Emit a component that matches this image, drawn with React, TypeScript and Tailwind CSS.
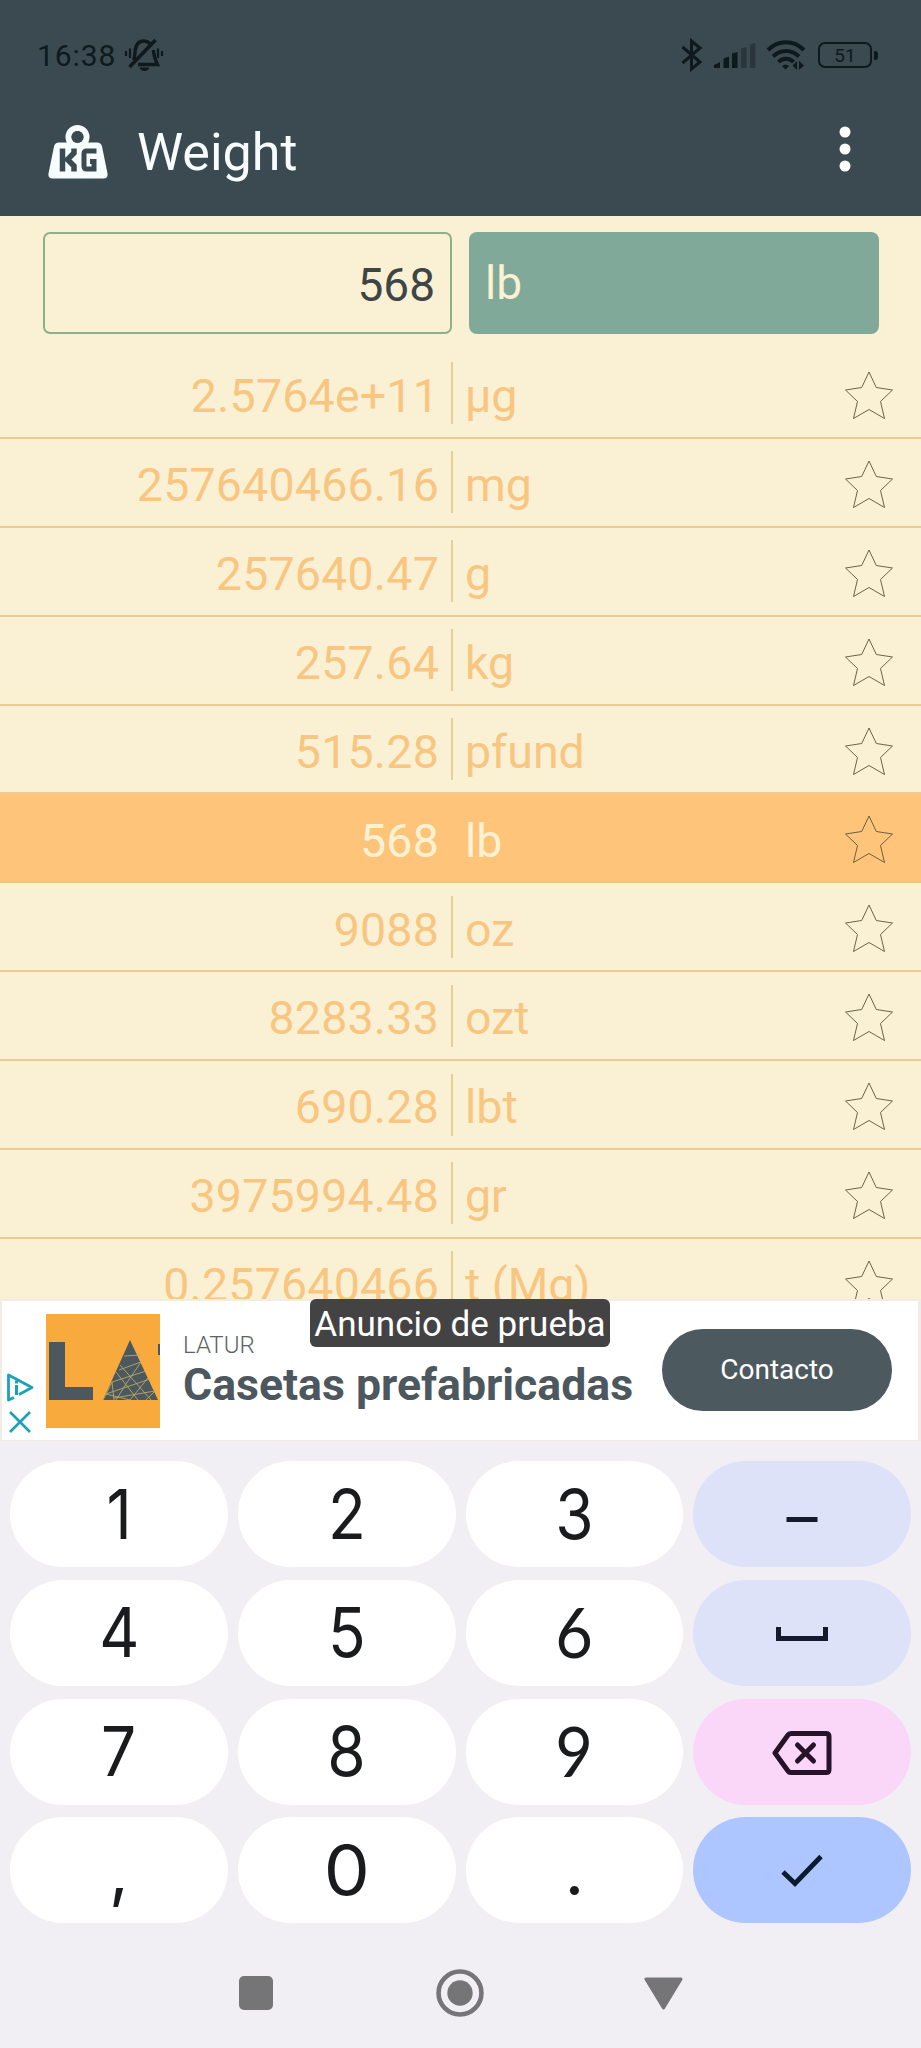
import type { ReactNode } from "react";

type Unit = { value: string; unit: string; selected?: boolean };

const units: Unit[] = [
  { value: "2.5764e+11", unit: "µg" },
  { value: "257640466.16", unit: "mg" },
  { value: "257640.47", unit: "g" },
  { value: "257.64", unit: "kg" },
  { value: "515.28", unit: "pfund" },
  { value: "568", unit: "lb", selected: true },
  { value: "9088", unit: "oz" },
  { value: "8283.33", unit: "ozt" },
  { value: "690.28", unit: "lbt" },
  { value: "3975994.48", unit: "gr" },
  { value: "0.257640466", unit: "t (Mg)" },
];

function MutedBell() {
  return (
    <svg className="ml-[8px] h-[34px] w-[40px]" viewBox="0 0 40 34" fill="none" stroke="#0f191d" strokeWidth="3.400">
      <path d="M9.500 22c2-4 1-7 2-11 1-5 4-8 8-8 3 0 5 1 6.500 3M29.500 12c0 4 1 8 4 14.500H14" />
      <path d="M31.500 2 5.500 29" strokeWidth="3.600" />
      <path d="M15.500 29.500h10c-.8 2.300-2.300 3.500-5 3.500s-4.200-1.200-5-3.500z" fill="#0f191d" stroke="none" />
      <path d="M2 13v5M6 10.500v9.500M34 10.500v9.500M38 13v5" strokeWidth="2.200" />
    </svg>
  );
}

function StatusIcons() {
  return (
    <div className="flex items-center">
      <svg className="h-[34px] w-[22px]" viewBox="0 0 22 34" fill="none" stroke="#0f191d" strokeWidth="3">
        <path d="M1.500 9 19 24 10.500 31V3L19 10 1.500 25" />
      </svg>
      <svg className="ml-[11px] h-[30px] w-[42px]" viewBox="0 0 42 30">
        <path d="M0 28v-3l6-3v6zM9.500 28V18.500l5.500-2v11.500zM18 28V13.500l5.500-1.500v16z" fill="#0f191d" />
        <path d="M27 28V8.500l5.500-1.500v21zM36 28V4.500l5.500-1.500v25z" fill="#2b363c" />
      </svg>
      <svg className="ml-[10px] h-[30px] w-[40px]" viewBox="0 0 40 30" fill="none" stroke="#0f191d" strokeWidth="4">
        <path d="M2 10C12-.5 28-.5 38 10M7 16.500c7.500-7.500 18.500-7.500 26 0M12.500 22c4-4.500 11-4.500 15 0" />
        <path d="M16 26q4-3 7 0l-3.500 3.500z" fill="#0f191d" stroke="none" />
        <path d="M31 21v9l-4.500-4.500zM33 30v-9l5 4.500z" fill="#0f191d" stroke="none" />
      </svg>
      <div className="ml-[12px] flex h-[26px] w-[54px] items-center justify-center rounded-[7px] border-[2.500px] border-[#0f191d] text-[19px] leading-none text-[#0f191d]">
        51
      </div>
      <div className="ml-[2px] h-[9px] w-[4px] rounded-r-[3px] bg-[#0f191d]" />
    </div>
  );
}

function WeightIcon() {
  return (
    <svg className="h-[56px] w-[60px]" viewBox="0 0 60 56">
      <circle cx="29.500" cy="13" r="9" fill="none" stroke="#f7fcff" strokeWidth="6" />
      <path d="M11 18.500h38q4 0 5 4l5.500 27q.8 5-4 5H4.500q-4.800 0-4-5L6 22.500q1-4 5-4z" fill="#f7fcff" />
      <path d="M14.500 24.500v23M26 24.500v4.500l-6.500 6.500L26 42v5.500" fill="none" stroke="#3b4950" strokeWidth="5.500" />
      <path d="M48.500 27H38.500q-2.500 0-2.500 3v12q0 3 2.500 3h7.500v-7.500H42" fill="none" stroke="#3b4950" strokeWidth="5" />
      <circle cx="29.500" cy="13" r="6" fill="#3b4950" />
    </svg>
  );
}

function Star() {
  return (
    <svg className="h-[50px] w-[50px]" viewBox="0 0 50 50" fill="none" stroke="#5b513c" strokeWidth="0.9">
      <path d="M25 2 32.300 17.500 48.500 20 36.500 31.500 40.500 48.500 25 39.500 9.500 48.500 13.500 31.500 1.500 20 17.700 17.500z" />
    </svg>
  );
}

function UnitRow({ value, unit, selected }: Unit) {
  return (
    <div
      className={
        selected
          ? "flex h-[88.900px] shrink-0 items-center border-b-2 border-[#f2c47f] bg-[#fec57a] text-[#fbf1d3]"
          : "flex h-[88.900px] shrink-0 items-center border-b-2 border-[#ebcb93] text-[#f8c681]"
      }
    >
      <div className="w-[439px] pt-[6px] text-right tracking-[0.200px]">{value}</div>
      <div className={selected ? "ml-[12px] h-[62px] w-[2px]" : "ml-[12px] h-[62px] w-[2px] bg-[#e6cf94]"} />
      <div className="ml-[12px] flex-1 pt-[6px]">{unit}</div>
      <div className="mr-[27px] pt-[3px]">
        <Star />
      </div>
    </div>
  );
}

function AdLogo() {
  return (
    <svg className="h-[114px] w-[114px]" viewBox="0 0 114 114">
      <path d="M0 0h114v114H0z" fill="#f8ab3c" />
      <path d="M3 28h16v45h28v13H3zM84 26l28 60H57zM112 30h2v11h-2z" fill="#4c585d" />
      <g fill="none" stroke="#b7a86c" strokeWidth="0.900">
        <path d="M78 42 95 41M73 56 95 48M66 68 100 57M60 80 104 65M68 84 109 77M57 86 66 68M74 51 105 86M70 58 92 86M95 48 80 70 70 86M102 64 84 86M66 68 68 86M109 77 100 86M60 80 84 86" />
      </g>
    </svg>
  );
}

function AdBanner() {
  return (
    <div className="relative flex h-[142px] shrink-0 border-t-[2px] border-r-[3px] border-b-[1px] border-l-2 border-[#f1ece6] bg-white">
      <div className="flex w-[44px] flex-col pt-[71px] pl-[4px]">
        <svg className="h-[30px] w-[28px]" viewBox="0 0 28 30" fill="none" stroke="#1ba2bb" strokeWidth="2.800">
          <path d="M8 25.500 2.500 28V3L26 15.500 13 22.500" strokeLinejoin="round" />
          <path d="M10.500 13v10M10.500 8.500v3" strokeWidth="3" />
        </svg>
        <svg className="mt-[8px] ml-[2px] h-[24px] w-[24px]" viewBox="0 0 24 24" stroke="#1ba2bb" strokeWidth="2.600">
          <path d="M2 2 22 22M22 2 2 22" />
        </svg>
      </div>
      <div className="pt-[12.500px]">
        <AdLogo />
      </div>
      <div className="ml-[23px] pt-[29px] text-[#4c585d]">
        <div className="h-[30px] text-[24px] leading-[30px] font-light text-[#5c6265]">LATUR</div>
        <div className="text-[44.600px] leading-[50px] font-bold whitespace-nowrap">Casetas prefabricadas</div>
      </div>
      <div className="mt-[28px] mr-[26px] ml-auto flex h-[82px] w-[230px] shrink-0 items-center justify-center rounded-full bg-[#4c595f] text-[28px] leading-none text-white">
        Contacto
      </div>
      <div className="absolute -top-[2px] left-[308px] flex h-[48px] w-[300px] items-center justify-center rounded-[6px] bg-[#434343] pt-[3px] text-[35px] leading-none whitespace-nowrap text-white">
        Anuncio de prueba
      </div>
    </div>
  );
}

type Key = { id: string; tone: string; label: ReactNode };

const white = "bg-white";
const lilac = "bg-[#dee2f9]";

const digitStyles: Record<string, string> = {
  "0": "scale-x-[1.06]",
  "6": "-mt-[2px] font-['Lato'] scale-x-[0.94]",
  "9": "-mt-[2px] font-['Lato'] scale-x-[0.94]",
};

const digit = (d: string): Key => ({
  id: d,
  tone: white,
  label: <span className={digitStyles[d] ?? "scale-x-[0.9]"}>{d}</span>,
});

const keys: Key[] = [
  digit("1"),
  digit("2"),
  digit("3"),
  {
    id: "minus",
    tone: lilac,
    label: (
      <svg className="h-[50px] w-[60px]" viewBox="0 0 60 50">
        <path d="M14.500 30.500h31" stroke="#151b2c" strokeWidth="5" />
      </svg>
    ),
  },
  digit("4"),
  digit("5"),
  digit("6"),
  {
    id: "space",
    tone: lilac,
    label: (
      <svg className="h-[50px] w-[60px]" viewBox="0 0 60 50">
        <path d="M6.500 19v11.500h47V19" fill="none" stroke="#151b2c" strokeWidth="5" />
      </svg>
    ),
  },
  digit("7"),
  digit("8"),
  digit("9"),
  {
    id: "backspace",
    tone: "bg-[#fad7f9]",
    label: (
      <svg className="h-[50px] w-[60px]" viewBox="0 0 60 50" fill="none" stroke="#261329" strokeWidth="5" strokeLinejoin="round">
        <path d="M19 6.500h35q3 0 3 3v33q0 3-3 3H19q-2 0-3-1.500L3 26 16 8q1-1.500 3-1.500z" />
        <path d="M25.500 18 41.500 34M41.500 18 25.500 34" strokeLinecap="round" />
      </svg>
    ),
  },
  { id: "comma", tone: white, label: "," },
  digit("0"),
  { id: "dot", tone: white, label: "." },
  {
    id: "enter",
    tone: "bg-[#aec6ff]",
    label: (
      <svg className="h-[50px] w-[60px]" viewBox="0 0 60 50">
        <path d="M11 27 23 38.500 49 11.500" fill="none" stroke="#0b1b2e" strokeWidth="4.800" />
      </svg>
    ),
  },
];

export default function App() {
  return (
    <div className="flex h-[2048px] w-[921px] flex-col overflow-hidden bg-[#faf1d5] font-['Roboto',sans-serif]">
      <header className="h-[216px] shrink-0 bg-[#3b4950]">
        <div className="flex h-[74px] items-end justify-between pr-[43px] pl-[37px]">
          <div className="flex h-[38px] items-center">
            <span className="pt-[1px] text-[30px] leading-none tracking-[0.900px] text-[#0f191d]">16:38</span>
            <MutedBell />
          </div>
          <div className="flex h-[38px] items-center">
            <StatusIcons />
          </div>
        </div>
        <div className="flex h-[156px] items-center pr-[70px] pl-[48px]">
          <WeightIcon />
          <h1 className="ml-[29px] pt-[1px] text-[52px] leading-none text-[#f7fcff]">Weight</h1>
          <svg className="mb-[7px] ml-auto h-[48px] w-[12px]" viewBox="0 0 12 48" fill="#fff">
            <circle cx="6" cy="7" r="5.500" />
            <circle cx="6" cy="24" r="5.500" />
            <circle cx="6" cy="41" r="5.500" />
          </svg>
        </div>
      </header>

      <section className="flex h-[134px] shrink-0 gap-[17px] pt-[16px] pl-[43px] text-[46px] leading-none">
        <div className="flex h-[102px] w-[409px] items-center justify-end rounded-[7px] border-2 border-[#8bb08b] pt-[4px] pr-[15px] text-[#3f4444]">
          568
        </div>
        <div className="flex h-[102px] w-[410px] items-center rounded-[8px] bg-[#80a999] pl-[16px] text-[#fbf1d3]">lb</div>
      </section>

      <main className="flex h-[949px] shrink-0 flex-col overflow-hidden text-[46.500px] leading-none">
        {units.map((u) => (
          <UnitRow key={u.unit} {...u} />
        ))}
      </main>

      <AdBanner />

      <div className="grid shrink-0 grid-cols-4 gap-x-[10px] gap-y-[12.800px] bg-[#f2eff4] px-[10px] pt-[20px] font-['Inter',sans-serif] text-[69px] leading-none text-[#1a1b1d]">
        {keys.map((k) => (
          <div key={k.id} className={"flex h-[106px] items-center justify-center rounded-full " + k.tone}>
            {k.label}
          </div>
        ))}
      </div>

      <nav className="flex flex-1 items-start bg-[#f2eff4] pl-[239px]">
        <div className="mt-[53px] h-[34px] w-[34px] rounded-[5px] bg-[#757477]" />
        <svg className="mt-[46px] ml-[163px] h-[48px] w-[48px]" viewBox="0 0 47 47">
          <circle cx="23.500" cy="23.500" r="21" fill="none" stroke="#757477" strokeWidth="4.500" />
          <circle cx="23.500" cy="23.500" r="12.400" fill="#757477" />
        </svg>
        <svg className="mt-[54px] ml-[160px] h-[34px] w-[39px]" viewBox="0 0 38 33">
          <path d="M2 2h34L19 30z" fill="#757477" stroke="#757477" strokeWidth="3" strokeLinejoin="round" />
        </svg>
      </nav>
    </div>
  );
}
